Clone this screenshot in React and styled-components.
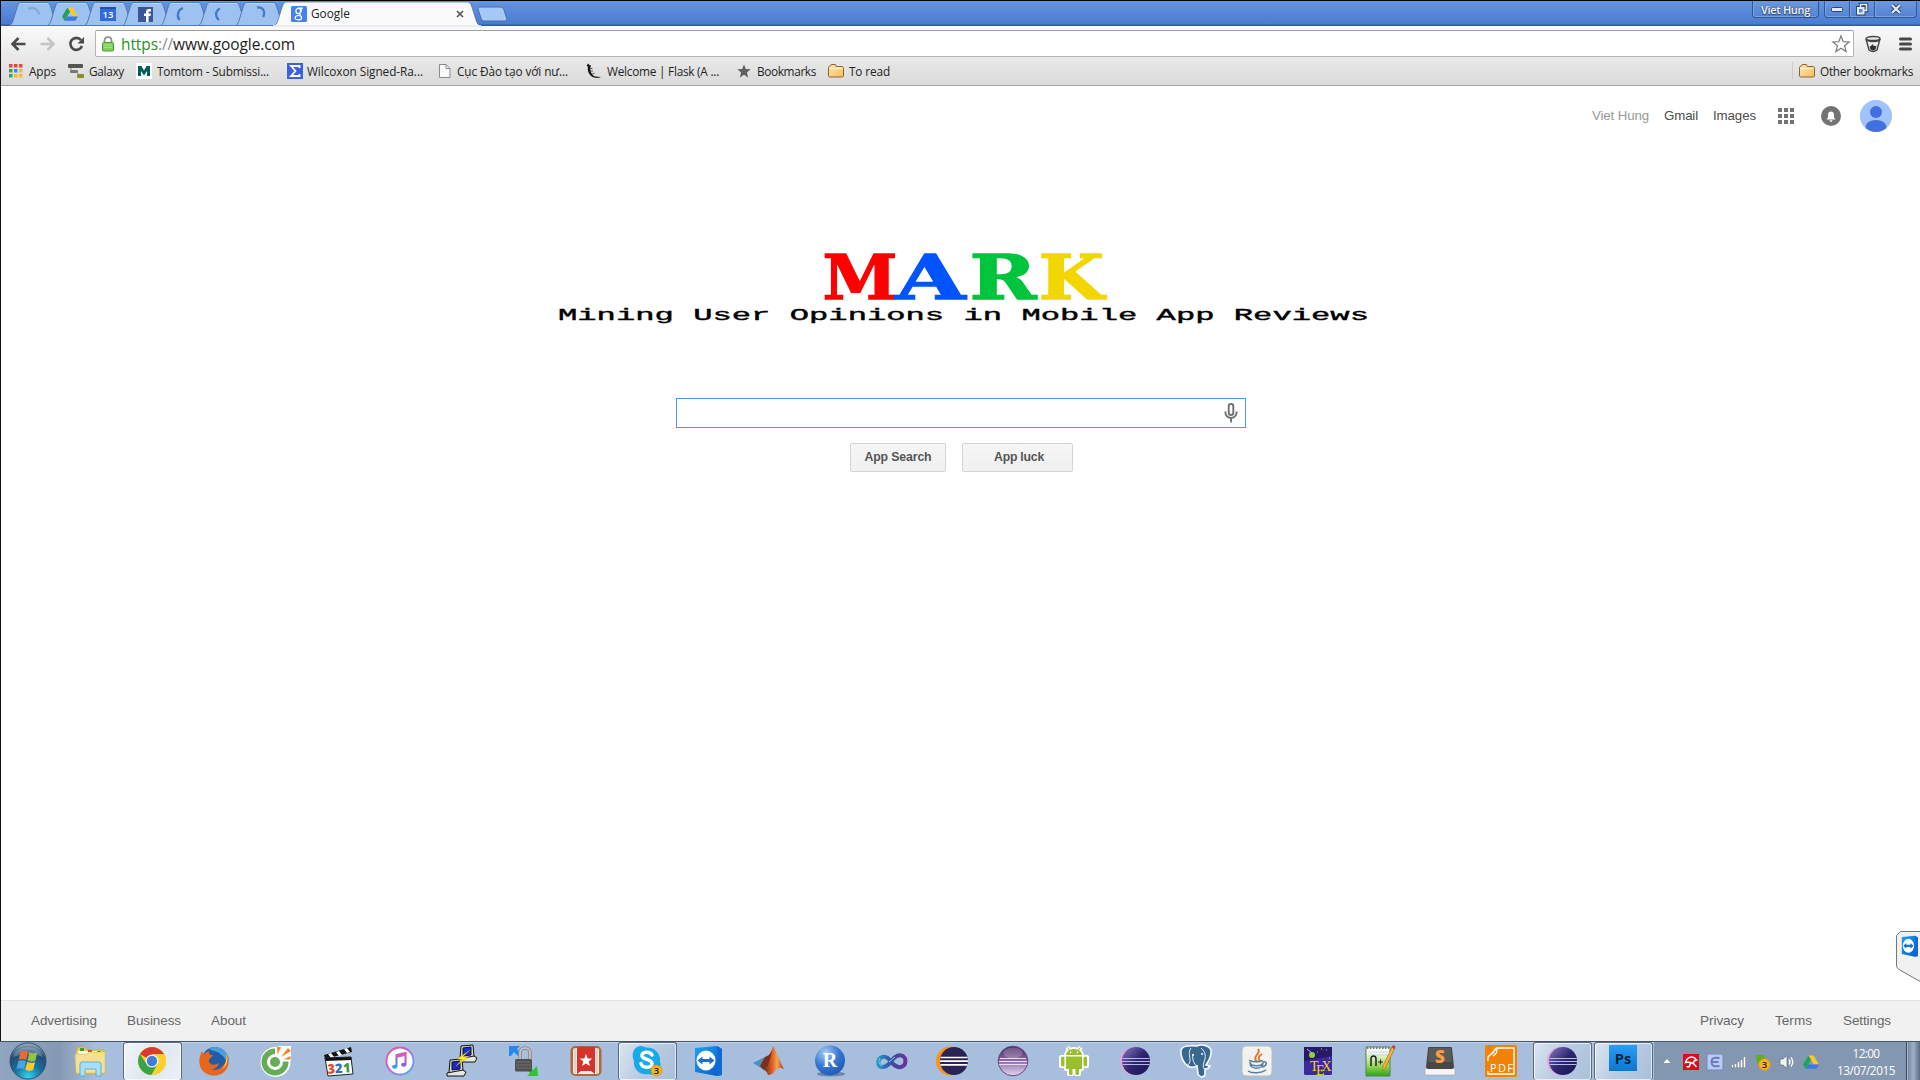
import React, { useLayoutEffect, useRef } from "react";
import styled, { createGlobalStyle } from "styled-components";

const Global = createGlobalStyle`
  * { box-sizing: border-box; }
  body { margin: 0; background: #fff; overflow: hidden; }
  svg { display: block; flex: none; overflow: visible; }
`;

const UI = `"Open Sans", "Noto Sans", sans-serif`;
const ARIAL = `"Liberation Sans", Arial, sans-serif`;

/* ---------- text that keeps a given width ---------- */
const Label = styled.span`
  display: block;
  flex: none;
  white-space: pre;
  width: ${(p) => p.$w}px;
  font-family: ${(p) => p.$font || UI};
  font-size: ${(p) => p.$size || 11.8}px;
  font-weight: ${(p) => p.$weight || 400};
  line-height: ${(p) => p.$lh || 16}px;
  color: ${(p) => p.$color || "#222"};
  text-shadow: ${(p) => p.$shadow || "none"};
  margin-left: ${(p) => p.$ml || 0}px;
`;

function Fit({ w, children, ...rest }) {
  const box = useRef(null);
  const inner = useRef(null);
  useLayoutEffect(() => {
    box.current.style.letterSpacing = "0px";
    const natural = inner.current.getBoundingClientRect().width;
    const n = inner.current.textContent.length;
    box.current.style.letterSpacing = `${(w - natural) / n}px`;
  }, [w]);
  return (
    <Label ref={box} $w={w} {...rest}>
      <span ref={inner}>{children}</span>
    </Label>
  );
}

/* ---------- browser frame ---------- */
const Screen = styled.div`
  width: 1920px;
  height: 1080px;
  display: flex;
  flex-direction: column;
  background: #fff;
  overflow: hidden;
`;
const Browser = styled.div`
  height: 1041px;
  display: flex;
  flex-direction: column;
  border-left: 1px solid #111;
  border-top: 1px solid #000;
`;
const TitleBar = styled.div`
  height: 25px;
  display: flex;
  align-items: flex-start;
  background: linear-gradient(#6594e0, #4a7bd0 92%, #2f5ba8 96%);
`;
const Tabs = styled.div`
  display: flex;
  padding: 1px 0 0 8px;
  flex: 1;
`;
const TabBox = styled.div`
  display: grid;
  width: ${(p) => p.$w}px;
  height: 24px;
  margin-right: ${(p) => p.$mr}px;
  z-index: ${(p) => (p.$active ? 2 : 1)};
  > * { grid-area: 1 / 1; }
`;
const TabContent = styled.div`
  display: flex;
  align-items: center;
  padding: 0 ${(p) => (p.$active ? 17 : 0)}px ${(p) => (p.$active ? 1 : 0)}px ${(p) => (p.$active ? 18 : 15.5)}px;
`;
const Spacer = styled.div`flex: 1;`;
const WindowControls = styled.div`
  display: flex;
  padding-right: 3px;
`;
const WinBtn = styled.div`
  height: 17px;
  width: ${(p) => p.$w}px;
  margin-left: ${(p) => p.$ml || 0}px;
  display: flex;
  align-items: center;
  justify-content: center;
  border: 1px solid #315591;
  border-top: 0;
  border-left-width: ${(p) => (p.$joined ? 0 : 1)}px;
  border-radius: 0 0 ${(p) => (p.$right ? 4 : 0)}px ${(p) => (p.$left ? 4 : 0)}px;
  background: linear-gradient(#6c98e0, #5583d2);
  box-shadow: inset 0 -1px 0 #7ba4e6, inset 1px 0 0 #7ba4e6;
`;
const Chrome = styled.div`
  height: 60px;
  display: flex;
  flex-direction: column;
  background: linear-gradient(#fafafa, #dadada);
  border-bottom: 1px solid #a3a3a3;
`;
const Toolbar = styled.div`
  height: 32px;
  display: flex;
  align-items: center;
  padding: 3px 7px 0 10px;
`;
const Omnibox = styled.div`
  flex: 1;
  height: 27px;
  margin: 0 11px 0 10px;
  display: flex;
  align-items: center;
  padding: 0 3px 0 6px;
  background: #fff;
  border: 1px solid #b4b4b4;
  border-top-color: #9d9d9d;
  border-radius: 2px;
`;
const Bookmarks = styled.div`
  height: 27px;
  display: flex;
  align-items: center;
  padding: 0 7px 2px 8px;
`;
const Bookmark = styled.div`
  display: flex;
  align-items: center;
  gap: ${(p) => p.$gap}px;
  margin-right: ${(p) => p.$mr || 0}px;
`;
const Divider = styled.div`
  width: 1px;
  height: 17px;
  margin-right: 6px;
  background: #cbcbcb;
`;

/* ---------- page ---------- */
const Page = styled.div`
  flex: 1;
  display: flex;
  flex-direction: column;
`;
const AccountBar = styled.div`
  height: 60px;
  display: flex;
  align-items: center;
  justify-content: flex-end;
  padding-right: 27px;
`;
const Hero = styled.div`
  flex: 1;
  display: flex;
  flex-direction: column;
  align-items: flex-start;
  padding: 100px 0 0 554px;
`;
const SearchBox = styled.div`
  width: 570px;
  height: 30px;
  margin: 66px 0 0 121px;
  display: flex;
  align-items: center;
  justify-content: flex-end;
  padding-right: 7px;
  border: 1px solid #4d90fe;
`;
const Buttons = styled.div`
  display: flex;
  gap: 16px;
  margin: 15px 0 0 295px;
`;
const Button = styled.div`
  height: 29px;
  width: ${(p) => p.$w}px;
  display: flex;
  align-items: center;
  justify-content: center;
  padding: 0 0 1px ${(p) => p.$pl || 0}px;
  border: 1px solid #d4d4d4;
  border-radius: 2px;
  background: linear-gradient(#f6f6f6, #f0f0f0);
`;
const Footer = styled.div`
  height: 41px;
  display: flex;
  align-items: center;
  padding: 0 29px 1px 30px;
  background: #f1f1f1;
  border-top: 1px solid #e2e2e2;
`;
const SidePanel = styled.div`
  position: absolute;
  left: 1896px;
  top: 931px;
`;

/* ---------- taskbar ---------- */
const Taskbar = styled.div`
  height: 39px;
  display: flex;
  background: #a7bfdc;
  border-top: 1px solid #46566a;
  box-shadow: inset 0 1px 0 #bfd2e8;
`;
const StartArea = styled.div`
  width: 59px;
  flex: none;
  display: flex;
  align-items: center;
  padding-left: 9px;
  background: linear-gradient(90deg, #8fa5c1, #8799b2);
`;
const Slot = styled.div`
  width: ${(p) => p.$w}px;
  flex: none;
  height: 38px;
  display: flex;
  justify-content: center;
  background: ${(p) => (p.$first ? "linear-gradient(90deg, #8799b2, #a7bfdc 60%)" : "none")};
`;
const TaskButton = styled.div`
  width: 59px;
  height: 38px;
  display: flex;
  align-items: center;
  justify-content: center;
  padding: 0 1px 1px 0;
  border: ${(p) => (p.$state ? "1px solid #5b6b7f" : "1px solid transparent")};
  border-bottom: 0;
  border-radius: 3px;
  box-shadow: ${(p) => (p.$state ? "inset 0 0 0 1px rgba(255,255,255,.65)" : "none")};
  background: ${(p) =>
    p.$state === "active"
      ? "linear-gradient(120deg, #f3f6fa, #dfe7f1 50%, #eaf0f7)"
      : p.$state === "open"
      ? "linear-gradient(120deg, #dbe5f1, #b9cbe2 50%, #a9bfdb)"
      : "none"};
`;
const Tray = styled.div`
  flex: 1;
  display: flex;
  align-items: center;
  padding-left: 8px;
  background: #8497b1;
`;
const TrayIcons = styled.div`
  display: flex;
  align-items: center;
  gap: 8px;
  padding-top: 1px;
`;
const Clock = styled.div`
  width: 60px;
  height: 38px;
  margin-left: 17px;
  display: flex;
  flex-direction: column;
  align-items: center;
  padding-top: 3px;
`;
const ShowDesktop = styled.div`
  width: 14px;
  height: 38px;
  margin-left: 10px;
  border-left: 1px solid #3f4c5e;
  background: linear-gradient(90deg, #71839b, #9fb0c6 50%, #596b83);
  box-shadow: inset 1px 0 0 #a9b8cb;
`;

/* ---------- small icons ---------- */
const Drive = ({ s = 16 }) => (
  <svg width={s} height={s} viewBox="0 0 16 16">
    <path d="M5.4 1.5h5.2L16 10.5h-5.2z" fill="#fbc82c" />
    <path d="M5.4 1.5 0 10.5l2.6 4.3L8 5.8z" fill="#1fa35c" />
    <path d="M5.3 10.5H16l-2.6 4.3H2.6z" fill="#3c79e6" />
  </svg>
);
const Spin = ({ d, c }) => (
  <svg width="16" height="16" viewBox="0 0 16 16">
    <path d={d} fill="none" stroke={c} strokeWidth="2.3" />
  </svg>
);
const CalendarIcon = () => (
  <svg width="16" height="16" viewBox="0 0 16 16">
    <path d="M0 1h16v14H0z" fill="#2f6bdc" />
    <path d="M0 1h16v2H0z" fill="#234fa8" />
    <text x="8" y="12.3" textAnchor="middle" fontFamily={UI} fontSize="9.5" fontWeight="600" fill="#fff">13</text>
  </svg>
);
const FacebookIcon = () => (
  <svg width="15" height="15" viewBox="0 0 15 15">
    <path d="M0 0h15v15H0z" fill="#3a5794" />
    <path d="M8 15V9H6V6.5h2V5c0-2 1.1-3 3-3h2v2.4h-1.4c-.8 0-1 .4-1 1.1v1h2.3L12.5 9h-1.9v6z" fill="#fff" />
  </svg>
);
const GIcon = () => (
  <svg width="16" height="16" viewBox="0 0 16 16">
    <rect width="16" height="16" rx="1.5" fill="#4682ee" />
    <g fill="none" stroke="#fff" strokeWidth="1.2">
      <ellipse cx="7.3" cy="5" rx="2.4" ry="2.7" />
      <path d="M7 2.200h5M9.500 2.600c1.600 2 .8 3.300-.7 4.400-1.200.9.2 1.500 1.200 2.500" />
      <ellipse cx="7.400" cy="11.700" rx="3.200" ry="2.200" />
    </g>
  </svg>
);
const Folder = () => (
  <svg width="16" height="14" viewBox="0 0 16 14">
    <defs>
      <linearGradient id="fold" x1="0" y1="0" x2="1" y2="1">
        <stop offset="0" stopColor="#ffe8b4" />
        <stop offset="1" stopColor="#f4bd5a" />
      </linearGradient>
    </defs>
    <path d="M.5 12V3.500l1-1.500h1l.7-1.500h4.200l.8 2h6.300l1 1V12l-1 1h-13z" fill="url(#fold)" stroke="#8d6233" />
    <path d="M1.500 4.500h13" stroke="#fff3d2" />
  </svg>
);

const favicons = [
  <Spin d="M3 3C8 .5 13.500 3 14 8.500" c="#84a9df" />,
  <Drive />,
  <CalendarIcon />,
  <FacebookIcon />,
  <Spin d="M8 2C2.500 4 1.500 10 4.500 14" c="#4479c8" />,
  <Spin d="M7 2.500C2 5 2 10.500 6 14" c="#4479c8" />,
  <Spin d="M6 1.500C12 .5 15 6 12 11" c="#4479c8" />,
];

function Tab({ children }) {
  return (
    <TabBox $w={50} $mr={-12.3}>
      <svg width="50" height="24" viewBox="0 0 50 24">
        <path d="M.5 23.500C3 22.500 3.500 20 4.500 17L8.500 4C9.300 1.500 10 .5 12 .5h26c2 0 2.700 1 3.500 3.500l4 13c1 3 1.500 5.500 4 6.500z" fill="#9dc2f2" stroke="#5379b2" />
        <path d="M11 1.500h28" stroke="#bad5f8" />
      </svg>
      <TabContent>{children}</TabContent>
    </TabBox>
  );
}

const bookmarks = [
  { t: "Apps", w: 27, gap: 6, mr: 12, icon: (
    <svg width="14" height="14" viewBox="0 0 14 14">
      {["#e8453c", "#e8453c", "#e8453c", "#35a35a", "#4285f4", "#f7b92d", "#35a35a", "#f7b92d", "#f7b92d"].map((c, i) => (
        <rect key={i} x={(i % 3) * 5} y={Math.floor(i / 3) * 5} width="3.500" height="3.500" fill={c} />
      ))}
    </svg>) },
  { t: "Galaxy", w: 35, gap: 5, mr: 12, icon: (
    <svg width="16" height="16" viewBox="0 0 16 16">
      <rect y="1" width="15" height="4" rx="1" fill="#55564f" />
      <rect x="2" y="7" width="8" height="3" rx="1" fill="#77786f" />
      <rect x="9" y="11" width="7" height="4" rx="1" fill="#8c8a2a" />
      <path d="M3 5v3M9 9l2 3" stroke="#8b8b86" />
    </svg>) },
  { t: "Tomtom - Submissi...", w: 112, gap: 5, mr: 18, icon: (
    <svg width="16" height="16" viewBox="0 0 16 16">
      <path d="M0 0h16v16H0z" fill="#fff" />
      <path d="M2 13V3h3.500L8 7.500 10.500 3H14v10h-3V8l-3 4.500L5 8v5z" fill="#075e5b" />
    </svg>) },
  { t: "Wilcoxon Signed-Ra...", w: 116, gap: 4, mr: 16, icon: (
    <svg width="16" height="16" viewBox="0 0 16 16">
      <path d="M0 0h16v16H0z" fill="#3a62dc" />
      <path d="M12.500 5V3H4l4.500 5L4 13h8.500v-2" fill="none" stroke="#fff" strokeWidth="1.800" />
    </svg>) },
  { t: "Cục Đào tạo với nư...", w: 111, gap: 4, mr: 18, icon: (
    <svg width="14" height="16" viewBox="0 0 14 16">
      <path d="M.5 1.500h6.500l4 4v9H.5z" fill="#fafafa" stroke="#8b8b8b" />
      <path d="M7 1.500v4h4" fill="none" stroke="#8b8b8b" />
    </svg>) },
  { t: "Welcome | Flask (A ...", w: 112, gap: 5, mr: 18, icon: (
    <svg width="16" height="16" viewBox="0 0 16 16">
      <path d="M.5 2.500 2.500.5l1.200 2 1.300-.5C3.500 7 5 11.500 9 13.500l6 .5c-5 2-10 .5-12-3.500C1.800 8 1.500 5.500 2 4z" fill="#161616" />
      <path d="M4.500 5.500h2M5 8h2M6.500 10.500h2" stroke="#555" />
    </svg>) },
  { t: "Bookmarks", w: 59, gap: 6, mr: 12, icon: (
    <svg width="14" height="14" viewBox="0 0 14 14">
      <path d="M7 .5 8.800 5l4.900.3L9.900 8.500l1.300 4.900L7 10.700l-4.200 2.700 1.300-4.900L.3 5.300 5.200 5z" fill="#606060" />
    </svg>) },
  { t: "To read", w: 41, gap: 5, icon: <Folder /> },
];

/* ---------- taskbar icons, 32px boxes ---------- */
const I = ({ children }) => <svg width="32" height="32" viewBox="0 0 32 32">{children}</svg>;

const Defs = () => (
  <svg width="0" height="0" viewBox="0 0 1 1">
    <defs>
      <radialGradient id="orb" cx=".5" cy=".95" r=".95"><stop offset="0" stopColor="#35d4f5" /><stop offset=".4" stopColor="#16719f" /><stop offset=".75" stopColor="#234a70" /><stop offset="1" stopColor="#9fb9cf" /></radialGradient>
      <linearGradient id="ecl" x1="0" y1="0" x2="1" y2="1"><stop offset="0" stopColor="#8a7cc4" /><stop offset=".5" stopColor="#2c2770" /><stop offset="1" stopColor="#1b1555" /></linearGradient>
      <linearGradient id="plum" x1="0" y1="0" x2="0" y2="1"><stop offset="0" stopColor="#40205c" /><stop offset=".5" stopColor="#8d6ca8" /><stop offset="1" stopColor="#e6d8ef" /></linearGradient>
      <linearGradient id="itn" x1="0" y1="0" x2="1" y2="1"><stop offset="0" stopColor="#f0519c" /><stop offset=".5" stopColor="#b565dc" /><stop offset="1" stopColor="#3fb4f5" /></linearGradient>
      <linearGradient id="note" x1="1" y1="0" x2="0" y2="1"><stop offset="0" stopColor="#f0458f" /><stop offset="1" stopColor="#3b8df2" /></linearGradient>
      <radialGradient id="rr" cx=".35" cy=".25" r=".9"><stop offset="0" stopColor="#a9cdf8" /><stop offset=".5" stopColor="#3677cf" /><stop offset="1" stopColor="#1951ae" /></radialGradient>
      <linearGradient id="vs" x1="0" y1="0" x2="1" y2="0"><stop offset="0" stopColor="#2396c9" /><stop offset=".5" stopColor="#3b4da5" /><stop offset="1" stopColor="#69319b" /></linearGradient>
      <linearGradient id="npp" x1="0" y1="0" x2="0" y2="1"><stop offset=".15" stopColor="#fff" /><stop offset=".6" stopColor="#a5dc65" /><stop offset="1" stopColor="#2fa415" /></linearGradient>
      <linearGradient id="ps" x1="0" y1="0" x2="0" y2="1"><stop offset="0" stopColor="#2b9df2" /><stop offset="1" stopColor="#0c77cf" /></linearGradient>
      <linearGradient id="mat" x1="0" y1="0" x2="1" y2="0"><stop offset="0" stopColor="#6b2a17" /><stop offset=".45" stopColor="#e8662b" /><stop offset=".65" stopColor="#f6a54b" /><stop offset="1" stopColor="#b3301a" /></linearGradient>
      <linearGradient id="tv" x1="0" y1="0" x2="1" y2="1"><stop offset="0" stopColor="#1ba1f5" /><stop offset="1" stopColor="#0759c8" /></linearGradient>
    </defs>
  </svg>
);

const StartOrb = () => (
  <svg width="38" height="38" viewBox="0 0 38 38">
    <circle cx="19" cy="19" r="18" fill="url(#orb)" stroke="#31526f" />
    <path d="M4 15C8 2 30 2 34 15c-9-4-20-4-30 0z" fill="#fff" opacity=".25" />
    <path d="M11.500 9.500c3-1.300 5-1 7.500.3L17.300 18c-2.500-1.300-4.800-1.500-7.500-.3z" fill="#ee6a2c" />
    <path d="M20.300 10.300c2.700 1.300 5 1.300 8 .2l-2 8.200c-3 1.200-5.200.9-7.700-.3z" fill="#93c342" />
    <path d="M9.500 19c2.700-1.200 5-1 7.500.3l-2 8c-2.300-1.200-4.500-1.500-7.500-.3z" fill="#4ba3e0" />
    <path d="M18.300 19.800c2.700 1.300 5 1.300 7.800.1l-2 8.200c-3 1.200-5.200 1-7.800-.3z" fill="#fcc831" />
  </svg>
);

const Eclipse = ({ moon = "#e8a5d8" }) => (
  <I>
    <circle cx="15" cy="16" r="14" fill={moon} />
    <circle cx="17" cy="16" r="14" fill="url(#ecl)" />
    <path d="M3.500 13.500h27M3 16.500h28M3.500 19.500h27" stroke="#b7bbe6" strokeWidth="1" />
  </I>
);
const TeamViewer = () => (
  <>
    <path d="M3 3 25 1l5 3v26l-5 1-22-4z" fill="url(#tv)" />
    <path d="M25 1l5 3v26l-5 1z" fill="#0f6ad6" />
    <ellipse cx="14" cy="15.500" rx="9.500" ry="10" fill="#fff" />
    <path d="m5.500 15.500 5-4v2.500h7v-2.500l5 4-5 4V17h-7v2.500z" fill="#176fd0" />
  </>
);

const tasks = [
  { icon: <I>
      <path d="M2 6l2-4h7l2 3h17v24H2z" fill="#e7c968" stroke="#c19d43" strokeWidth=".6" />
      <path d="M4 6h24v20H4z" fill="#fff" /><path d="M6 3h4v3H6z" fill="#3e9b3a" /><path d="M14 5h4v2h-4z" fill="#d64533" /><path d="M23 6h4v2h-4z" fill="#3b84d0" />
      <path d="M1 9h12l2-2h16v21H2z" fill="#f5e093" stroke="#d2b65c" strokeWidth=".5" />
      <path d="M6 31V19q0-2 2-2h17q2 0 2 2v12h-5v-7H11v7z" fill="#a9def6" stroke="#5cb0dc" />
    </I> },
  { state: "active", icon: <I>
      <circle cx="16" cy="16" r="14" fill="#fbd02d" />
      <path d="M16 16 3.900 9A14 14 0 0 1 28.100 9H16z" fill="#dc3b2b" />
      <path d="M3.900 9A14 14 0 0 0 15.500 30l6-11-11 0z" fill="#3aa349" />
      <path d="M16 9h12.100A14 14 0 0 1 15.500 30L22 19z" fill="#fbd02d" />
      <circle cx="16" cy="16" r="6.500" fill="#f4f4f4" /><circle cx="16" cy="16" r="5.200" fill="#3d7fd6" />
    </I> },
  { icon: <I>
      <circle cx="17" cy="15" r="13" fill="#245ba6" /><path d="M17 2c7 0 13 5 14 12l-1 8c-2-10-6-12-9-14-4-3-8-2-10-4 2-1 4-2 6-2z" fill="#4d9fdb" />
      <path d="M28 8c4 7 3 15-2 19-7 6-17 4-22-2C0 19 1 12 4 6l2 4c1-3 4-4 6-4-2 2-1 4 3 4-1 3-5 3-4 7 2 4 7 3 10 1-1 4-4 6-8 6 7 3 14-3 15-9z" fill="#e6661c" />
      <path d="M28 8c3 7 1 13-4 16 4-5 5-9 4-16z" fill="#fbd247" />
    </I> },
  { icon: <I>
      <circle cx="15.500" cy="17" r="15" fill="#fff" /><path d="M18 1h13v15H18z" fill="#fff" />
      <path d="M15 3.500a13.500 13.500 0 1 0 13.500 13l-5.500 0a8 8 0 1 1-8-7.500z" fill="#64ad54" />
      <circle cx="15" cy="17" r="5" fill="#64ad54" /><path d="M17.500 9.500 17 2h4zM21 12l7-9 3 3zM23.500 14.500l7-3.500v3.500z" fill="#f28420" />
    </I> },
  { icon: <I>
      <path d="m2 10 27-8 1 5L3 14z" fill="#111" /><path d="m6 9 3 4 3-1-3-4zM14 7l3 4 3-1-3-4zM22 4l3 4 3-1-3-4z" fill="#fff" />
      <path d="m3 13 26-1 2 17-25 2z" fill="#fff" stroke="#222" /><path d="m3 13 26-1 .3 3L3.500 16z" fill="#111" />
      <g fontFamily={UI} fontWeight="800" fontSize="13" transform="rotate(-4 16 25)"><text x="5.500" y="28" fill="#d94e22">3</text><text x="13" y="28" fill="#2b6fbe">2</text><text x="21" y="28" fill="#3c9b3c">1</text></g>
    </I> },
  { icon: <I>
      <circle cx="16" cy="16" r="13.500" fill="#fff" stroke="url(#itn)" strokeWidth="1.800" />
      <path d="M12.500 21.500V10l9-2v11.500" fill="none" stroke="url(#note)" strokeWidth="2" /><path d="m12 10 10-2.300v3L12 13z" fill="#d65bc3" />
      <ellipse cx="10.700" cy="21.800" rx="2.700" ry="2" fill="#3b9cf2" /><ellipse cx="19.700" cy="19.800" rx="2.700" ry="2" fill="#8267e2" />
    </I> },
  { icon: <I>
      <g stroke="#111" strokeWidth="1"><path d="m15 1 12-1 1 11-2 3H14z" fill="#d8d8cf" /><path d="m17 3 8-1v8l-8 1z" fill="#1727dd" /><path d="m13 14 15-3 3 2-2 4H14z" fill="#e7e7df" />
      <path d="m4 15 12-1 1 11-2 3H3z" fill="#d8d8cf" /><path d="m6 17 8-1v8l-8 1z" fill="#1727dd" /><path d="m1 28 16-3 3 2-2 4H1z" fill="#e7e7df" /></g>
      <path d="m24 5-13 9 5 .5L10 21l12-8.500-5-1z" fill="#fff02a" stroke="#a79b00" strokeWidth=".5" />
    </I> },
  { icon: <I>
      <path d="M1 1h11L9 4l4 4-3 3-4-4-3 4H1z" fill="#2588f2" /><path d="M30 31H19l3-3-4-4 3-3 4 4 4-4z" fill="#2bc630" />
      <path d="M12 15V7.500c0-6 10-6 10 0V15" fill="none" stroke="#8d8d8d" strokeWidth="3.600" /><path d="M12 15V7.500c0-6 10-6 10 0V15" fill="none" stroke="#c9c9c9" strokeWidth="1.600" /><rect x="7" y="14" width="17" height="12.500" rx="1.500" fill="#52504f" /><path d="M8 17h15M8 20h15M8 23h15" stroke="#73706e" />
    </I> },
  { icon: <I>
      <rect x=".5" y="1" width="31" height="30" rx="5" fill="#b0673e" /><rect x="3" y="3" width="26" height="26" rx="2" fill="#efe9e1" />
      <path d="M7 2h18v27l-4-3H11l-4 3z" fill="#d3342b" /><path d="M5 3v25M27 3v25" stroke="#c9bcae" />
      <path d="m16 9 1.700 4.400 4.700.2-3.700 2.900 1.300 4.500-4-2.600-4 2.600 1.300-4.500-3.700-2.900 4.700-.2z" fill="#fff" />
    </I> },
  { state: "open", icon: <I>
      <path d="M9 1c3 0 4 1 6 1.500C23 2 30 8 29 16.500c3 8-4 15-11.500 12.500C9 31 2 24 3 16 0 10 2 2 9 1z" fill="#17a9e8" />
      <path d="M21 10c-2-4-11-3.500-10 1 1 4 10 3 10 7.500 0 5-10 5-11 0" fill="none" stroke="#fff" strokeWidth="3.500" strokeLinecap="round" />
      <circle cx="25.500" cy="25.500" r="5.500" fill="#fbb31d" stroke="#c98806" strokeWidth=".6" /><text x="25.500" y="29" fontSize="9.500" fontFamily={UI} fontWeight="600" textAnchor="middle" fill="#222">3</text>
    </I> },
  { icon: <I><TeamViewer /></I> },
  { icon: <I>
      <path d="m0 18 12-6 7 6-8 7z" fill="#4d8fbd" /><path d="m12 12 4-2 5-8-3 16-7 7-4-4z" fill="#7b2e1a" />
      <path d="M20 1c3 4 7 16 11 23-4-2-6-1-8 1-3 4-5 5-8 5-1-3-2-4-4-5 6-4 7-18 9-24z" fill="url(#mat)" />
    </I> },
  { icon: <I>
      <ellipse cx="17" cy="29" rx="14" ry="2.500" fill="#6c86a8" /><circle cx="16" cy="15.500" r="15" fill="url(#rr)" />
      <text x="16" y="22" fontSize="20" fontFamily='"Liberation Serif", serif' fontWeight="700" textAnchor="middle" fill="#fff">R</text>
    </I> },
  { icon: <I>
      <path d="M16 17c-3-5-6-6-9-5-5 2-5 9 0 10 5 .5 8-4 11-8 3-3.500 6-5 10-3 4 3 3 10-2 11-4 1-7-2-10-5z" fill="none" stroke="url(#vs)" strokeWidth="4" strokeLinejoin="round" />
      <path d="M5 13c-2 3-1 7 2 8M14 17l6-5" stroke="#83cdec" fill="none" />
    </I> },
  { icon: <I>
      <circle cx="14.500" cy="16" r="14.500" fill="#f7941e" /><circle cx="18" cy="16" r="14" fill="#2b2353" />
      <path d="M4.500 12.500h27M4 16.200h28M4.500 19.900h27" stroke="#fff" strokeWidth="1.700" />
    </I> },
  { icon: <I>
      <circle cx="16" cy="16" r="14.800" fill="url(#plum)" stroke="#654681" /><ellipse cx="16" cy="8" rx="9.500" ry="5.500" fill="#fff" opacity=".22" />
      <path d="M3 13.500h26M2 16.500h28M2 19.500h28" stroke="#e9def0" strokeWidth="1" />
    </I> },
  { icon: <I>
      <g stroke="#fff" strokeWidth="4" strokeLinejoin="round" fill="#fff"><path d="M8 11h16v13H8zM8 10c1-8 15-8 16 0zM3 12h3v9H3zM26 12h3v9h-3zM11 24h3v5h-3zM18 24h3v5h-3zM9 2l3 4M23 2l-3 4" /></g>
      <g fill="#98bf2c"><path d="M8 11.500h16V24H8zM8 10c1-8 15-8 16 0z" /><rect x="3" y="11.500" width="3.500" height="10" rx="1.700" /><rect x="25.500" y="11.500" width="3.500" height="10" rx="1.700" /><rect x="11" y="22" width="3.500" height="8" rx="1.500" /><rect x="17.500" y="22" width="3.500" height="8" rx="1.500" /><path d="m9.500 2 2.500 4M22.500 2 20 6" stroke="#98bf2c" /></g>
      <circle cx="12.500" cy="7.300" r=".9" fill="#fff" /><circle cx="19.500" cy="7.300" r=".9" fill="#fff" />
    </I> },
  { icon: <Eclipse /> },
  { icon: <I>
      <path d="M9 1c3-1 6 0 8 0 4-2 12-1 14 4 1 5-3 12-5 15l4 1c-1 2-3 3-5 3v6c-2 3-6 2-7-1l-1-8-3 1c-3 1-4 0-6-1C3 18 0 10 1 5c1-3 5-4 8-4z" fill="#386890" stroke="#f4f7fa" strokeWidth="1.700" />
      <path d="M11 3c-3 4-1 9-1 12 0 2-1 4-2 5M21 3c5 4 5 9 3 14-1 3-1 5 0 7M17 21c-3-2-5-6-4-12" fill="none" stroke="#e9f0f6" /><circle cx="13" cy="10" r="1" fill="#fff" /><circle cx="22" cy="9" r="1" fill="#fff" />
    </I> },
  { icon: <I>
      <rect x="1" y="1" width="30" height="30" rx="4" fill="#f2f2f0" stroke="#b9bcc0" /><path d="M17 4c4 5-7 7-1 13M21 9c-5 3-3 5-2 8" fill="none" stroke="#e87722" strokeWidth="2" />
      <path d="M9 17c0 5 13 5 13 0M9 18c0 7 13 7 13 0M7 26c4 3 14 2 18-1M22 17c5-1 4 4-1 5M8 15.500c4 1.500 10 1.500 14 0" fill="none" stroke="#577f9f" strokeWidth="1.500" />
    </I> },
  { icon: <I>
      <rect x="2" y="2" width="28" height="28" rx="1.500" fill="#3a2a9c" /><path d="M2 2h28v9L2 16z" fill="#291a66" /><circle cx="10" cy="10" r="3" fill="#8fd13c" /><path d="m5 4 5 4M15 7h1M24 5h1M27 13h1M19 4h1" stroke="#c2b9ff" />
      <g fill="#f3d422" fontFamily='"Liberation Serif", serif' fontSize="14"><text x="8" y="26">T</text><text x="14" y="29.500">E</text><text x="19.500" y="26">X</text></g>
    </I> },
  { icon: <I>
      <path d="M3 2h24v29H3z" fill="url(#npp)" stroke="#52844a" /><path d="M4 3h22" stroke="#777" strokeWidth="2" strokeDasharray="1.500 1.500" /><path d="M5 7h20M5 10h20" stroke="#c5d5e6" />
      <path d="M8 21v-7c0-4 5-4 5 0v7" fill="none" stroke="#222" strokeWidth="1.500" /><path d="M15 17h5M17.500 14.500v5M22 17h4M24 14.500v5" stroke="#222" />
      <path d="m29 2 2.500 1.500L23 22l-3.500 4 .5-5z" fill="#f2b53a" stroke="#9b6b1c" strokeWidth=".6" /><path d="m28.500 2 2-2 2 1.500-1 3z" fill="#c83c4a" />
    </I> },
  { icon: <I>
      <path d="M1 25 3 20h26l2 5v4q0 1-1 1H2q-1 0-1-1z" fill="#f4f4f4" stroke="#999" strokeWidth=".5" /><path d="M4 3q0-1 1-1h22q1 0 1 1l2 19q0 2-2 2H4q-2 0-2-2z" fill="#474747" />
      <path d="M5 3h22l1 14H4z" fill="#5a5a5a" />
      <text x="16" y="18" fontFamily={UI} fontWeight="800" fontSize="17" textAnchor="middle" fill="#ff9c42">S</text>
    </I> },
  { icon: <I>
      <rect width="32" height="32" rx="1.500" fill="#f08205" /><path d="M3 16V12l9-9h17v26H3v-3M3 12c1-3 4-2 5-4s2-5 4-5c0 5-1 6-4 8" fill="none" stroke="#fff" strokeWidth="1.300" />
      <text x="5" y="27" fontFamily={UI} fontSize="11" textLength="23" fill="#fff">PDF</text>
    </I> },
  { state: "open", icon: <Eclipse /> },
  { state: "open", icon: <I>
      <rect x="2" y="0" width="28" height="26" fill="url(#ps)" /><text x="16" y="18.500" fontFamily={UI} fontWeight="700" fontSize="14.500" textAnchor="middle" fill="#06233f">Ps</text>
    </I> },
];

const Foot = (p) => <Fit $size={13.5} $font={ARIAL} $color="#666" {...p} />;
const winText = "0 0 2px #26477f, 0 1px 1px #26477f";

export default function App() {
  return (
    <>
      <Global />
      <Screen>
        <Browser>
          <TitleBar>
            <Tabs>
              {favicons.map((f, i) => <Tab key={i}>{f}</Tab>)}
              <TabBox $w={208} $mr={-6} $active>
                <svg width="208" height="24" viewBox="0 0 208 24">
                  <path d="M0 24c3-.5 4-3 5-6L9.500 4c.8-2.500 2-4 4-4h181c2 0 3 1.500 4 4l4.500 14c1 3 2 5.500 5 6z" fill="#fafafa" stroke="#4d6ea5" strokeWidth=".7" />
                  <path d="M0 24h208" stroke="#fafafa" strokeWidth="1.500" />
                </svg>
                <TabContent $active>
                  <GIcon />
                  <Fit w={39} $ml={4} $lh={15}>Google</Fit>
                  <Spacer />
                  <svg width="8" height="8" viewBox="0 0 8 8"><path d="m1 1 6 6M7 1 1 7" stroke="#555" strokeWidth="1.700" /></svg>
                </TabContent>
              </TabBox>
              <svg width="33" height="24" viewBox="0 0 33 24">
                <path d="M4 5h22q2 0 2.700 2l3 9.500q.6 2.500-1.700 2.500H9q-2 0-2.700-2L3 7q-.5-2 1-2z" fill="#a5c8f5" stroke="#466fae" />
              </svg>
            </Tabs>
            <WindowControls>
              <WinBtn $w={67} $left $right>
                <Fit w={49} $size={11} $weight={600} $lh={15} $color="#f5f1e8" $shadow={winText}>Viet Hung</Fit>
              </WinBtn>
              <WinBtn $w={26} $ml={5} $left>
                <svg width="12" height="6" viewBox="0 0 12 6"><rect x=".5" y="1.500" width="11" height="4" rx="1" fill="#e4ebf5" stroke="#29466f" /></svg>
              </WinBtn>
              <WinBtn $w={25} $joined>
                <svg width="12" height="12" viewBox="0 0 12 12">
                  <path d="M4.500 4V1.500h6v6H8" fill="none" stroke="#29466f" strokeWidth="3.500" /><path d="M2 5h5.500v5.500H2z" fill="none" stroke="#29466f" strokeWidth="3.800" />
                  <path d="M4.500 4V1.500h6v6H8" fill="none" stroke="#e4ebf5" strokeWidth="1.600" /><path d="M2 5h5.500v5.500H2z" fill="#5c89d4" stroke="#e4ebf5" strokeWidth="2" />
                </svg>
              </WinBtn>
              <WinBtn $w={42} $joined $right>
                <svg width="12" height="10" viewBox="0 0 12 10"><path d="m2 1 8 8M10 1 2 9" stroke="#29466f" strokeWidth="4" /><path d="m2 1 8 8M10 1 2 9" stroke="#e4ebf5" strokeWidth="2.200" /></svg>
              </WinBtn>
            </WindowControls>
          </TitleBar>
          <Chrome>
            <Toolbar>
              <svg width="74" height="16" viewBox="0 0 74 16">
                <path d="M7.500 2 1.500 8l6 6M1.500 8h13" fill="none" stroke="#4a4a4a" strokeWidth="2.600" />
                <path d="m36.500 2 6 6-6 6M42.500 8h-13" fill="none" stroke="#c4c4c4" strokeWidth="2.600" />
                <path d="M70 4A6 6 0 1 0 71 10" fill="none" stroke="#4a4a4a" strokeWidth="2.600" />
                <path d="M73 1v6.500h-6.500z" fill="#4a4a4a" />
              </svg>
              <Omnibox>
                <svg width="12" height="16" viewBox="0 0 12 16">
                  <path d="M2.500 8V4.500c0-4.500 7-4.500 7 0V8" fill="none" stroke="#8f938c" strokeWidth="1.800" />
                  <rect x=".5" y="6.500" width="11" height="8.500" rx="1" fill="#82cf5c" stroke="#519a35" /><path d="M2 9h8M2 11.500h8" stroke="#a7e287" />
                </svg>
                <Fit w={174} $ml={7} $size={15.5} $lh={22} $color="#1c1c1c">
                  <Scheme>https</Scheme><Slashes>://</Slashes>www.google.com
                </Fit>
                <Spacer />
                <svg width="18" height="18" viewBox="0 0 18 18"><path d="m9 1 2.200 5.600 6 .3-4.700 3.800 1.600 5.900L9 13.200l-5.100 3.400 1.600-5.900L.8 6.900l6-.3z" fill="#fff" stroke="#7c7c7c" strokeWidth="1.200" /></svg>
              </Omnibox>
              <svg width="48" height="18" viewBox="0 0 48 18">
                <ellipse cx="8" cy="3.500" rx="7" ry="2" fill="#e8e8e8" stroke="#444" strokeWidth="1.400" /><path d="M1.300 5 4 15q4 3 8 0l2.700-10q-6 3-13.400 0z" fill="#eee" stroke="#444" strokeWidth="1.400" /><path d="M4.500 11.500q1.500 0 3-2.500 1 3 4 1.500l-1 4q-2.500 2-5 0z" fill="#333" />
                <path d="M35.500 4h10M35.500 9h10M35.500 14h10" stroke="#484848" strokeWidth="3" strokeLinecap="round" />
              </svg>
            </Toolbar>
            <Bookmarks>
              {bookmarks.map((b) => (
                <Bookmark key={b.t} $gap={b.gap} $mr={b.mr}>
                  {b.icon}
                  <Fit w={b.w}>{b.t}</Fit>
                </Bookmark>
              ))}
              <Spacer />
              <Divider />
              <Bookmark $gap={5}><Folder /><Fit w={93}>Other bookmarks</Fit></Bookmark>
            </Bookmarks>
          </Chrome>
          <Page>
            <AccountBar>
              <Fit w={57} $size={13.3} $font={ARIAL} $color="#999">Viet Hung</Fit>
              <Fit w={34} $ml={15} $size={13.3} $font={ARIAL} $color="#4c4c4c">Gmail</Fit>
              <Fit w={43} $ml={15} $size={13.3} $font={ARIAL} $color="#4c4c4c">Images</Fit>
              <svg width="137" height="32" viewBox="0 0 137 32">
                {[0, 1, 2, 3, 4, 5, 6, 7, 8].map((i) => <rect key={i} x={22 + (i % 3) * 6} y={8 + Math.floor(i / 3) * 6} width="4" height="4" fill="#737373" />)}
                <circle cx="75" cy="16" r="10" fill="#737373" />
                <path d="M70.500 19.500 72 17.500v-3c0-4 6-4 6 0v3l1.500 2zM73.500 20.300h3c0 2-3 2-3 0z" fill="#fff" />
                <clipPath id="av"><circle cx="120" cy="16" r="16" /></clipPath>
                <circle cx="120" cy="16" r="16" fill="#a1c2fa" />
                <g clipPath="url(#av)" fill="#4271df"><circle cx="120" cy="12" r="6" /><ellipse cx="120" cy="27" rx="10.500" ry="7" /></g>
              </svg>
            </AccountBar>
            <Hero>
              <svg width="816" height="86" viewBox="555 246 816 86">
                <g fontFamily='"DejaVu Serif", serif' fontWeight="700" fontSize="62" strokeWidth="1.300">
                  <text x="822.500" y="299" textLength="75" lengthAdjust="spacingAndGlyphs" fill="#f00" stroke="#f00">M</text>
                  <text x="895.500" y="299" textLength="70" lengthAdjust="spacingAndGlyphs" fill="#0054ff" stroke="#0054ff">A</text>
                  <text x="969.500" y="299" textLength="67" lengthAdjust="spacingAndGlyphs" fill="#00c43c" stroke="#00c43c">R</text>
                  <text x="1038.500" y="299" textLength="65.500" lengthAdjust="spacingAndGlyphs" fill="#f2d600" stroke="#f2d600">K</text>
                </g>
                <text x="558" y="320.300" fontFamily='"Liberation Mono", monospace' fontSize="17" textLength="811" lengthAdjust="spacingAndGlyphs" fill="#000" stroke="#000" strokeWidth=".4">Mining User Opinions in Mobile App Reviews</text>
              </svg>
              <SearchBox>
                <svg width="14" height="20" viewBox="0 0 14 20">
                  <rect x="4.700" y="1" width="4.600" height="11" rx="2.300" fill="none" stroke="#6f6f6f" strokeWidth="1.900" />
                  <path d="M1.300 8.500c0 8.500 11.400 8.500 11.400 0M7 15v4.500" fill="none" stroke="#6f6f6f" strokeWidth="1.900" />
                </svg>
              </SearchBox>
              <Buttons>
                <Button $w={96}><Fit w={67} $size={12.3} $font={ARIAL} $weight={700} $color="#555">App Search</Fit></Button>
                <Button $w={111} $pl={3}><Fit w={50} $size={12.3} $font={ARIAL} $weight={700} $color="#555">App luck</Fit></Button>
              </Buttons>
            </Hero>
            <Footer>
              <Foot w={66}>Advertising</Foot>
              <Foot w={54} $ml={30}>Business</Foot>
              <Foot w={35} $ml={30}>About</Foot>
              <Spacer />
              <Foot w={44}>Privacy</Foot>
              <Foot w={37} $ml={31}>Terms</Foot>
              <Foot w={48} $ml={31}>Settings</Foot>
            </Footer>
          </Page>
        </Browser>
        <Taskbar>
          <StartArea><StartOrb /></StartArea>
          {tasks.map((t, i) => (
            <Slot key={i} $first={i === 0} $w={i < 9 ? 62 : 61}>
              <TaskButton $state={t.state}>{t.icon}</TaskButton>
            </Slot>
          ))}
          <Tray>
            <svg width="10" height="6" viewBox="0 0 10 6"><path d="M5 .5 9.500 5.500H.5z" fill="#fff" stroke="#56677e" strokeWidth=".5" /></svg>
            <Spacer />
            <TrayIcons>
              <svg width="16" height="16" viewBox="0 0 16 16"><path d="M0 0h16v16H0z" fill="#df0b16" /><path d="M2.500 8.500C4 3 10 1 13.500 6c-2 0-3 1.500-3.500 3.500-2-1-5-1.500-7.500-1zM8 8l-1.500 4c-.5 1.500-2.500 1-2.500 0M10.500 9.500l3 3.500" fill="none" stroke="#fff" strokeWidth="1.500" /></svg>
              <svg width="16" height="16" viewBox="0 0 16 16"><path d="M0 0h16v16H0z" fill="#b9cbf4" stroke="#7488be" /><path d="M12.500 4C7 3 4.500 4 4.500 8s2.500 5 8 4M5 8h6.500" fill="none" stroke="#6b7bb9" strokeWidth="2" /></svg>
              <svg width="16" height="16" viewBox="0 0 16 16"><path d="M1.500 11v2.500M4.500 10v3.500M7.500 8v5.500M10.500 6v7.500M13.500 3v10.500" stroke="#46566b" strokeWidth="3" /><path d="M1.500 11v2.500M4.500 10v3.500M7.500 8v5.500M10.500 6v7.500M13.500 3v10.500" stroke="#fff" strokeWidth="2" /></svg>
              <svg width="16" height="16" viewBox="0 0 16 16"><path d="m0 1 9 0 2 6-8 4z" fill="#62ad25" /><circle cx="9.500" cy="10.500" r="5.700" fill="#fbb31d" stroke="#dd9b10" /><text x="9.500" y="14" fontFamily={UI} fontSize="9.500" fontWeight="600" textAnchor="middle" fill="#222">3</text></svg>
              <svg width="16" height="16" viewBox="0 0 16 16"><path d="M1 5h3l4-3.500v13L4 11H1z" fill="#f4f4f4" stroke="#59687a" strokeWidth=".7" /><path d="M10 5.500q2 2.500 0 5M12 3.500q3.500 4.500 0 9" fill="none" stroke="#fff" strokeWidth="1.300" /></svg>
              <Drive />
            </TrayIcons>
            <Clock>
              <Fit w={27} $lh={17} $color="#fff">12:00</Fit>
              <Fit w={58} $lh={17} $color="#fff">13/07/2015</Fit>
            </Clock>
            <ShowDesktop />
          </Tray>
        </Taskbar>
        <Defs />
      </Screen>
      <SidePanel>
        <svg width="24" height="52" viewBox="0 0 24 52">
          <path d="M26 .5H4.500L.5 4.500V34q0 3 2.500 4.500L26 51.500z" fill="#f1f1f1" stroke="#777" />
          <g transform="translate(4 4) scale(.6 .7)"><TeamViewer /></g>
        </svg>
      </SidePanel>
    </>
  );
}

const Scheme = styled.span`color: #2a8f2a;`;
const Slashes = styled.span`color: #8a8a8a;`;
